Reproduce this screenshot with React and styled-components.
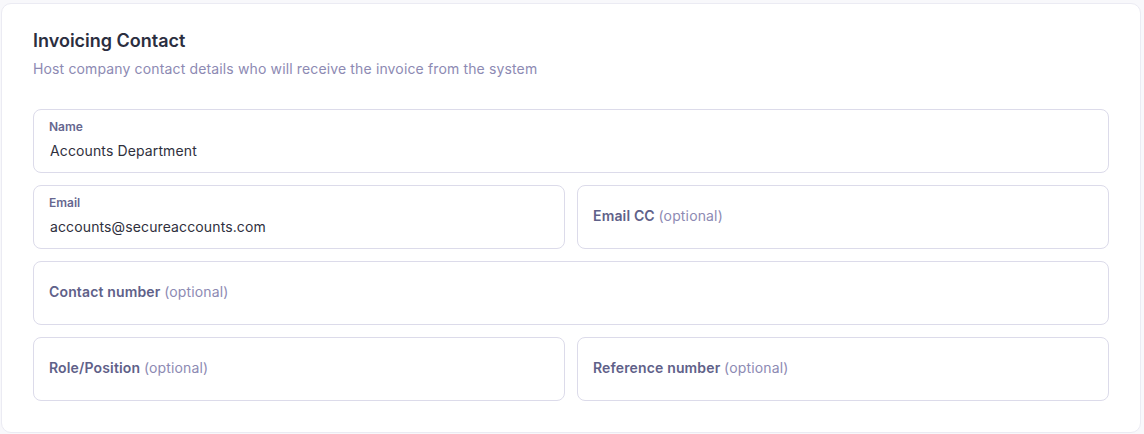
import React from "react";
import styled, { createGlobalStyle } from "styled-components";

const GlobalStyle = createGlobalStyle`
  body {
    margin: 0;
    background: #f8f8fb;
    font-family: Inter, "Noto Sans", sans-serif;
  }
`;

const Page = styled.div`
  padding: 3px 3px 1px 1px;
`;

const Card = styled.section`
  background: #ffffff;
  border: 1px solid #ebebf3;
  border-radius: 10px;
  padding: 23px 31px 31px 31px;
`;

const Title = styled.h2`
  margin: 0;
  font-size: 18px;
  line-height: 28px;
  font-weight: 600;
  color: #2b2e3f;
`;

const Subtitle = styled.p`
  margin: 4px 0 30px;
  font-size: 14px;
  line-height: 20px;
  letter-spacing: 0.14px;
  color: #8d8ab3;
`;

const Grid = styled.div`
  display: grid;
  grid-template-columns: 1fr 1fr;
  gap: 12px;
`;

const Field = styled.div`
  grid-column: ${(p) => (p.$wide ? "1 / -1" : "auto")};
  height: 64px;
  box-sizing: border-box;
  border: 1px solid #dcdbea;
  border-radius: 8px;
  padding: 0 15px;
  display: flex;
  flex-direction: column;
  justify-content: center;
  background: #fff;
`;

const SmallLabel = styled.div`
  font-size: 12px;
  line-height: 16px;
  font-weight: 600;
  color: #66678f;
  margin-top: -2px;
`;

const Value = styled.div`
  margin-top: 6px;
  font-size: 14px;
  line-height: 20px;
  letter-spacing: 0.12px;
  color: #2f303d;
  padding-left: 1px;
`;

const Placeholder = styled.div`
  font-size: 14px;
  line-height: 20px;
  font-weight: 600;
  letter-spacing: 0.15px;
  color: #5f6189;
  margin-top: -2px;

  span {
    font-weight: 400;
    color: #8d8ab3;
  }
`;

function InputField({ label, value, optional, wide }) {
  if (value) {
    return (
      <Field $wide={wide}>
        <SmallLabel>{label}</SmallLabel>
        <Value>{value}</Value>
      </Field>
    );
  }
  return (
    <Field $wide={wide}>
      <Placeholder>
        {label} {optional && <span>(optional)</span>}
      </Placeholder>
    </Field>
  );
}

export default function App() {
  return (
    <Page>
      <GlobalStyle />
      <Card>
        <Title>Invoicing Contact</Title>
        <Subtitle>
          Host company contact details who will receive the invoice from the system
        </Subtitle>
        <Grid>
          <InputField wide label="Name" value="Accounts Department" />
          <InputField label="Email" value="accounts@secureaccounts.com" />
          <InputField label="Email CC" optional />
          <InputField wide label="Contact number" optional />
          <InputField label="Role/Position" optional />
          <InputField label="Reference number" optional />
        </Grid>
      </Card>
    </Page>
  );
}
